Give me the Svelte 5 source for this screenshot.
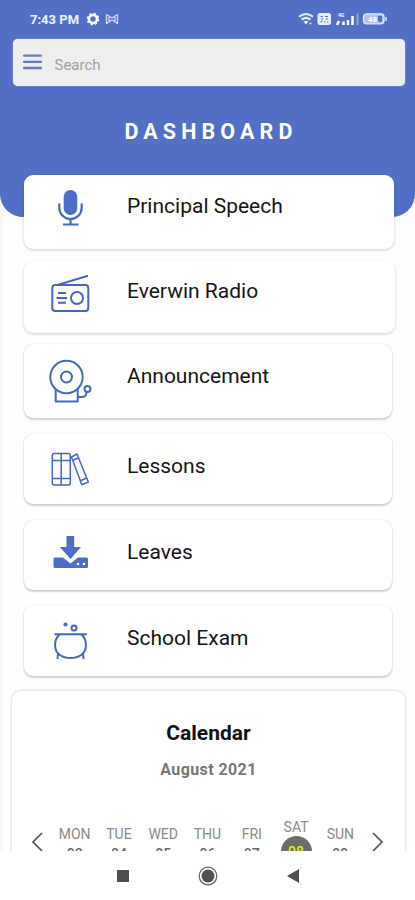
<script>
  let query = $state('');
  let selected = $state('SAT');

  const items = [
    { icon: 'mic', label: 'Principal Speech' },
    { icon: 'radio', label: 'Everwin Radio' },
    { icon: 'bell', label: 'Announcement' },
    { icon: 'books', label: 'Lessons' },
    { icon: 'download', label: 'Leaves' },
    { icon: 'pot', label: 'School Exam' }
  ];

  const days = [
    { name: 'MON', date: '03' },
    { name: 'TUE', date: '04' },
    { name: 'WED', date: '05' },
    { name: 'THU', date: '06' },
    { name: 'FRI', date: '07' },
    { name: 'SAT', date: '08' },
    { name: 'SUN', date: '09' }
  ];
</script>

<div class="screen">
  <main>
    <header>
      <div class="status">
        <span class="time">7:43 PM</span>
        <svg class="gear" width="14" height="14" viewBox="0 0 14 14">
          <circle cx="7" cy="7" r="4" fill="none" stroke="#fff" stroke-width="2.6" />
          <circle cx="7" cy="7" r="5.6" fill="none" stroke="#fff" stroke-width="1.4" stroke-dasharray="2.2 2.2" />
        </svg>
        <svg class="bow" width="14" height="12" viewBox="0 0 14 12">
          <path d="M1.5 1v10M12.5 1v10M1.5 1.5L7 5l5.5-3.5M1.5 10.5L7 7l5.5 3.5M4 4v4M10 4v4" fill="none" stroke="#d3def5" stroke-width="1.3" />
        </svg>
        <span class="spacer"></span>
        <svg width="90" height="14" viewBox="0 0 90 14">
          <path d="M1 4.8q7-5.600 14 0M3.5 7.6q4.500-3.600 9 0" fill="none" stroke="#e6edfb" stroke-width="2.1" />
          <path d="M5.500 9.800q2.500-2 5 0L8 12.500z" fill="#e6edfb" />
          <circle cx="12.5" cy="11.5" r="1" fill="#e6edfb" />
          <rect x="19.5" y="1" width="13.5" height="12" rx="2.5" fill="#e6edfb" />
          <path d="M22.500 4.500h2.500M27 4.500h3M23 7h2M28 7h2M22.500 10l2-1M26 10h1.500M29 10h1.500" stroke="#5170c5" stroke-width="1.2" />
          <text x="40" y="5" class="net">4G</text>
          <path d="M39 13l2-4M45.500 13V9.500M50 13V8M54.500 13V4" stroke="#fff" stroke-width="2.5" />
          <path d="M59.500 13V1.500" stroke="#8fa8de" stroke-width="2" />
          <rect x="65.5" y="1.8" width="20.5" height="10" rx="3" fill="#b2c3eb" stroke="#dfe8fa" stroke-width="1.3" />
          <rect x="80" y="3.8" width="4" height="6" fill="#5170c5" />
          <text x="70" y="9.8" class="charge">48</text>
          <path d="M88 5v4" stroke="#dfe8fa" stroke-width="1.5" />
        </svg>
      </div>

      <label class="search">
        <svg width="19" height="16" viewBox="0 0 19 16">
          <path d="M1 1.6h17M1 7.8h17M1 14h17" stroke="#6579ba" stroke-width="2.3" stroke-linecap="round" />
        </svg>
        <input type="text" placeholder="Search" bind:value={query} />
      </label>

      <h1>DASHBOARD</h1>
    </header>

    <nav class="menu">
      {#each items as item}
        <button class="card {item.icon}">
          <svg width="48" height="48" viewBox="0 0 48 48">
            {#if item.icon === 'mic'}
              <rect x="17.7" y="2" width="13.6" height="25" rx="6.8" class="solid" />
              <path d="M13.3 15.5v4.3a11.2 11.2 0 0 0 22.4 0v-4.3M24.5 31v5M17 36.5h15.500" class="line thick" />
            {:else if item.icon === 'radio'}
              <rect x="6.3" y="12" width="36" height="26" rx="3" class="line" />
              <path d="M11.5 12L42 2.7M12 20h8M10.5 25h10.500M12 29.7h8" class="line" />
              <circle cx="31" cy="25" r="6" class="line" />
            {:else if item.icon === 'bell'}
              <circle cx="20.5" cy="20" r="16.2" class="line" />
              <circle cx="20.5" cy="20" r="5.5" class="line" />
              <path d="M9.7 32v12.500h22V32M31.7 40h4.500q4 0 4.500-5" class="line" />
              <circle cx="41.5" cy="32" r="2.9" class="line" />
            {:else if item.icon === 'books'}
              <rect x="6.3" y="8.5" width="18" height="31.500" rx="2" class="line thin" />
              <path d="M15.2 8.5V40M6.3 15.5h18M6.3 33.5h18" class="line thin" />
              <path d="M25.5 12L31 9l11.300 28-6.500 2.700zM27.200 15.200l5.200-2.400M34.500 35.700l6-2.700" class="line thin" />
            {:else if item.icon === 'download'}
              <path d="M9 26.500h8l7.500 6 7.500-6h8.500q1.500 0 1.500 1.500v7.500q0 1.500-1.500 1.500H9q-1.500 0-1.500-1.500V28q0-1.500 1.500-1.500z" class="solid" />
              <path d="M20.500 5h7.700v11H35L24.500 28 13.800 16h6.700z" class="solid" />
              <circle cx="32" cy="33" r="1.3" fill="#fff" />
              <circle cx="38" cy="33" r="1.3" fill="#fff" />
            {:else}
              <circle cx="19.5" cy="7.5" r="2.1" class="solid" />
              <circle cx="28" cy="11" r="2.5" class="line" />
              <path d="M8.5 17.3h32.300M13.500 17.500C7.500 23 7.500 34 14 38c5.500 4 15.500 4 21 0 6.500-4 6.500-15 .5-20.500M12 36.500l-.5 5.500M37 36.500l.5 5.500" class="line" />
            {/if}
          </svg>
          <span>{item.label}</span>
        </button>
      {/each}
    </nav>

    <section class="calendar">
      <h2>Calendar</h2>
      <h3>August 2021</h3>
      <div class="week">
        <svg class="arrow" width="12" height="20" viewBox="0 0 12 20">
          <path d="M11 1L2 10l9 9" />
        </svg>
        <div class="days">
          {#each days as day}
            <button class="day" class:selected={selected === day.name} onclick={() => (selected = day.name)}>
              <span>{day.name}</span>
              <b>{day.date}</b>
            </button>
          {/each}
        </div>
        <svg class="arrow" width="12" height="20" viewBox="0 0 12 20">
          <path d="M1 1l9 9-9 9" />
        </svg>
      </div>
    </section>
  </main>

  <footer>
    <svg width="12" height="12" viewBox="0 0 12 12">
      <rect width="12" height="12" fill="#505050" />
    </svg>
    <svg width="20" height="20" viewBox="0 0 20 20">
      <circle cx="10" cy="10" r="8.8" fill="none" stroke="#666" stroke-width="1.3" />
      <circle cx="10" cy="10" r="6.5" fill="#505050" />
    </svg>
    <svg width="12" height="14" viewBox="0 0 12 14">
      <path d="M12 0v14L0 7z" fill="#505050" />
    </svg>
  </footer>
</div>

<style>
  :global(body) {
    margin: 0;
    background: #fff;
  }
  .screen {
    width: 415px;
    height: 900px;
    display: flex;
    flex-direction: column;
    overflow: hidden;
    font-family: Roboto, sans-serif;
    background: #fff;
  }
  main {
    height: 851px;
    flex: none;
    overflow: hidden;
    background: linear-gradient(90deg, #f5f5f5, #fefefe 4px);
  }
  button {
    border: none;
    padding: 0;
    font-family: inherit;
    background: none;
    cursor: pointer;
  }
  header {
    height: 217px;
    box-sizing: border-box;
    padding: 12px 10px 0 13px;
    border-radius: 0 0 23px 23px;
    background: #5170c5;
  }
  .status {
    display: flex;
    align-items: center;
    height: 14px;
    padding: 0 17px;
    margin-bottom: 13px;
  }
  .time {
    font-size: 13px;
    font-weight: 700;
    color: #eef4ff;
  }
  .gear {
    margin-left: 7px;
  }
  .bow {
    margin-left: 5px;
  }
  .spacer {
    flex: 1;
  }
  .net {
    font-size: 5px;
    font-weight: 700;
    fill: #fff;
  }
  .charge {
    font-size: 8px;
    font-weight: 700;
    fill: #fff;
  }
  .search {
    display: flex;
    align-items: center;
    height: 47px;
    box-sizing: border-box;
    padding: 0 10px;
    gap: 12.5px;
    border-radius: 5px;
    background: #eee;
    box-shadow: 0 0 1px #fff;
  }
  .search svg {
    flex: none;
    margin-bottom: 1px;
  }
  input {
    flex: 1;
    min-width: 0;
    padding: 5px 0 0;
    border: none;
    outline: none;
    background: none;
    font-family: inherit;
    font-size: 15px;
    color: #555;
  }
  input::placeholder {
    color: #a0a0a0;
  }
  h1 {
    margin: 33px 0 0 4px;
    line-height: 26px;
    font-size: 21.5px;
    font-weight: 700;
    letter-spacing: 5.1px;
    text-align: center;
    color: #fff;
  }
  .menu {
    display: flex;
    flex-direction: column;
    margin: -42px 20px 0 24px;
  }
  .card {
    display: flex;
    align-items: center;
    width: 368px;
    height: 70px;
    padding-left: 22px;
    gap: 33px;
    margin-bottom: 16px;
    border-radius: 9px;
    background: #fff;
    box-shadow: 0 0 2px rgba(0, 0, 0, 0.16), 0 2px 2px rgba(0, 0, 0, 0.16);
  }
  .card.mic {
    width: 370px;
    height: 74px;
    margin-bottom: 12px;
    box-shadow: 0 1px 3px rgba(0, 0, 0, 0.2);
  }
  .card.radio {
    width: 371px;
    height: 72px;
    margin-bottom: 11px;
    box-shadow: 0 1px 3px rgba(0, 0, 0, 0.2);
  }
  .card.bell {
    height: 74px;
  }
  .card span {
    padding-bottom: 6px;
    font-size: 21px;
    color: #151515;
  }
  .mic span,
  .radio span {
    padding-bottom: 13px;
  }
  .bell span {
    padding-bottom: 11px;
  }
  .solid {
    fill: #4d6ec6;
  }
  .line {
    fill: none;
    stroke: #4568c4;
    stroke-width: 2;
    stroke-linejoin: round;
  }
  .thick {
    stroke-width: 2.2;
  }
  .thin {
    stroke-width: 1.5;
  }
  .calendar {
    height: 220px;
    box-sizing: border-box;
    margin: -1px 10px 0 12px;
    padding-top: 29px;
    border-radius: 9px;
    background: #fff;
    box-shadow: 0 0 3px rgba(0, 0, 0, 0.26);
  }
  h2,
  h3 {
    margin: 0;
    text-align: center;
  }
  h2 {
    line-height: 27px;
    font-size: 21px;
    font-weight: 700;
    color: #111;
  }
  h3 {
    margin-top: 13px;
    line-height: 20px;
    font-size: 16px;
    font-weight: 700;
    letter-spacing: 0.4px;
    color: #777;
  }
  .week {
    display: flex;
    align-items: flex-start;
    justify-content: space-between;
    padding: 0 21px 0 19px;
    margin-top: 37px;
  }
  .arrow {
    flex: none;
    margin-top: 15px;
    fill: none;
    stroke: #555;
    stroke-width: 1.7;
  }
  .days {
    display: flex;
    width: 310px;
  }
  .day {
    flex: 1;
    display: flex;
    flex-direction: column;
    align-items: center;
    padding-top: 9px;
    font-size: 14px;
    line-height: 16px;
    color: #8a8a8a;
  }
  .day b {
    width: 31px;
    margin-top: 4px;
    font-weight: 500;
    color: #666;
  }
  .day.selected {
    padding-top: 2px;
  }
  .selected b {
    height: 31px;
    margin-top: 1px;
    line-height: 33px;
    border-radius: 50%;
    background: #6a6e68;
    color: #e2f21e;
  }
  footer {
    height: 49px;
    display: flex;
    align-items: center;
    justify-content: center;
    gap: 69px;
    background: #fff;
  }
</style>
